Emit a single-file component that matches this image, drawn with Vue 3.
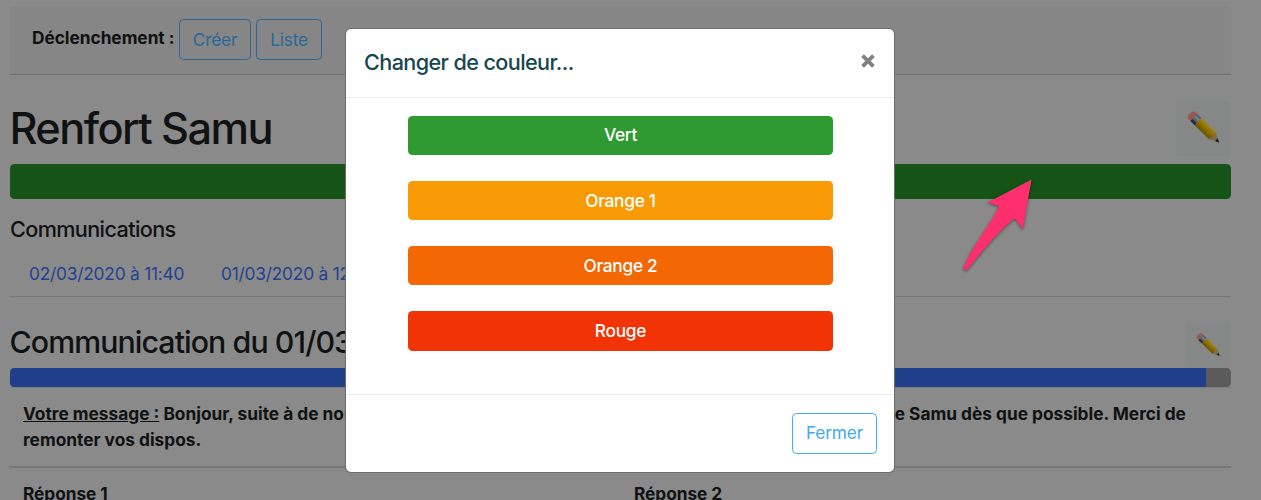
<script setup>
const colors = [
  { label: 'Vert', cls: 'green' },
  { label: 'Orange 1', cls: 'amber' },
  { label: 'Orange 2', cls: 'orange' },
  { label: 'Rouge', cls: 'red' },
]
</script>

<template>
  <div class="screen">
    <svg class="defs" width="0" height="0" aria-hidden="true">
      <defs>
        <linearGradient id="wood" x1="0" y1="0" x2="0" y2="1">
          <stop offset="0" stop-color="#a48617" />
          <stop offset="0.35" stop-color="#927400" />
          <stop offset="1" stop-color="#665005" />
        </linearGradient>
        <symbol id="pencil" viewBox="0 0 34 34">
          <g transform="translate(2.6 3.4) rotate(44.5)">
            <path d="M3.5 -4.9H7V4.9H3.5C-.8 4.9 -.8 -4.9 3.5 -4.9Z" fill="#965752" />
            <path d="M6 -4.9H12V4.9H6Z" fill="#59616c" />
            <path d="M6 -2.8H12V-.4H6Z" fill="#737b87" />
            <path d="M6 2H12V4.9H6Z" fill="#252b32" />
            <path d="M12 -4.9H32L34 0L32 4.9H12Z" fill="url(#wood)" />
            <path d="M32 -4.9L41 0L32 4.9L33 1.5L31.5 0L33 -1.8Z" fill="#7d6c45" />
            <path d="M37.6 -1.9L41.5 0L37.6 1.9Z" fill="#151515" />
          </g>
        </symbol>
      </defs>
    </svg>

    <main class="page">
      <div class="toolbar">
        <strong class="trigger">Déclenchement :</strong>
        <button class="btn create">Créer</button>
        <button class="btn list">Liste</button>
      </div>

      <div class="row title-row">
        <h1>Renfort Samu</h1>
        <button class="edit big"><svg><use href="#pencil" /></svg></button>
      </div>
      <div class="status"></div>

      <h5>Communications</h5>
      <nav class="tabs">
        <a>02/03/2020 à 11:40</a>
        <a>01/03/2020 à 12:15</a>
      </nav>

      <div class="row comm-row">
        <h3>Communication du 01/03/2020</h3>
        <button class="edit small"><svg><use href="#pencil" /></svg></button>
      </div>
      <div class="progress"><div class="done"></div></div>

      <div class="message">
        <div class="line">
          <span class="start"><u>Votre message :</u> Bonjour, suite à de nombreux</span>
          <span class="end">le Samu dès que possible. Merci de</span>
        </div>
        <div class="line"><span>remonter vos dispos.</span></div>
      </div>
      <div class="answers">
        <strong>Réponse 1</strong>
        <strong>Réponse 2</strong>
      </div>
    </main>

    <svg class="arrow" width="90" height="110" viewBox="0 0 90 110">
      <path d="M81.5 19.5L37.5 42.5L48.8 46C46 57 22 86 13.6 107.3C12.8 110.5 15.4 111 17.5 109C31 93 53 66 65 58.6L72.8 69Z" transform="translate(0 -10)" />
    </svg>

    <section class="modal">
      <header>
        <h2>Changer de couleur...</h2>
        <button class="close" aria-label="Fermer la fenêtre">
          <svg width="14" height="14" viewBox="0 0 14 14"><path d="M1.6 1.6L12.4 12.4M12.4 1.6L1.6 12.4" /></svg>
        </button>
      </header>
      <div class="choices">
        <button v-for="c in colors" :key="c.label" class="choice" :class="c.cls">{{ c.label }}</button>
      </div>
      <footer><button class="btn dismiss">Fermer</button></footer>
    </section>
  </div>
</template>

<style>
html, body { margin: 0; overflow: hidden; background: #8a8a8a; }
</style>

<style scoped>
.screen { position: relative; width: 1261px; height: 500px; overflow: hidden; background: #8a8a8a; color: #0f1112; font: 17.3px/26px Inter, sans-serif; }
.screen * { box-sizing: border-box; }
.defs { position: absolute; }
button { font: inherit; margin: 0; padding: 0; border: 0; background: none; }
h1, h2, h3, h5 { margin: 0; font-weight: 500; white-space: nowrap; }
.page { width: 1221px; margin-left: 10px; padding-top: 6px; }
.toolbar { height: 69px; display: flex; align-items: flex-start; padding: 13px 0 0 22px; background: #868686; border-bottom: 1px solid #727272; border-radius: 4px 4px 0 0; }
.trigger { width: 147px; padding-top: 6px; font-weight: 700; letter-spacing: -.03px; white-space: nowrap; }
.btn { height: 41px; border: 1px solid #26699a; border-radius: 4.5px; color: #26699a; letter-spacing: -.2px; }
.create { width: 72px; }
.list { width: 66px; margin-left: 5px; }
.row { display: flex; justify-content: space-between; }
.title-row { height: 89px; padding-top: 26px; }
h1 { font-size: 43.3px; line-height: 55px; letter-spacing: -1.55px; margin-left: -.6px; }
.edit { display: flex; align-items: center; justify-content: center; background: #868888; border-radius: 4px; }
.big { width: 55px; height: 55px; }
.big svg { width: 34px; height: 34px; margin-top: -4px; }
.small { width: 46px; height: 45px; }
.small svg { width: 25px; height: 25px; margin-top: -3px; }
.status { height: 35px; border-radius: 4.5px; background: #155317; }
h5 { font-size: 21.6px; line-height: 26px; margin-top: 17px; padding-bottom: 1px; letter-spacing: -.6px; }
.tabs { height: 54px; display: flex; border-bottom: 1px solid #777; padding: 18px 0 0 19px; color: #1f438f; letter-spacing: -.2px; }
.tabs a { width: 192px; white-space: nowrap; }
.comm-row { height: 71px; padding-top: 26px; }
h3 { font-size: 30.3px; line-height: 38px; letter-spacing: -.92px; margin-left: -.5px; }
.progress { height: 19px; border-radius: 4.5px; overflow: hidden; background: #5b5b5b; }
.done { width: 1196px; height: 19px; background: #1f3f8b; }
.message { height: 81px; padding: 13px 13px 0; border-top: 1px solid #7b7b7b; border-bottom: 2px solid #777; font-weight: 700; }
.line { display: flex; height: 26px; white-space: nowrap; }
.start { width: 867px; }
.answers { display: grid; grid-template-columns: 611px 1fr; padding: 13px 0 0 13px; }
.answers strong { font-weight: 700; letter-spacing: -.05px; }
.arrow { position: absolute; left: 950px; top: 170px; fill: #ff2e6d; filter: drop-shadow(0 1.5px 1.5px rgba(0, 0, 0, .45)); }
.modal { position: absolute; left: 346px; top: 29px; width: 548px; height: 443px; border-radius: 5px; background: #fff; box-shadow: 0 0 0 1px #6c6c6c; }
header { height: 69px; display: flex; justify-content: space-between; padding: 17px 19px 0 18px; border-bottom: 1px solid #e8eaec; }
h2 { color: #164650; font-size: 21.6px; line-height: 32px; letter-spacing: -.6px; }
.close { height: 14px; margin-top: 8px; }
.close svg { display: block; }
.close path { stroke: #818181; stroke-width: 3.8; }
.choices { height: 296px; padding: 18px 61px 0 62px; display: flex; flex-direction: column; gap: 26px; }
.choice { height: 39.1px; border-radius: 4.5px; color: #fff; font-weight: 500; letter-spacing: -.28px; }
.green { background: #2f9932; padding-bottom: 1px; }
.amber { background: #f79a05; }
.orange { background: #f36705; }
.red { background: #f23305; height: 40px; padding-bottom: 1px; }
footer { height: 78px; display: flex; justify-content: flex-end; padding: 18px 17px 0 0; border-top: 1px solid #e8eaec; }
.dismiss { width: 85px; padding-bottom: 1px; border-color: #42aaf5; color: #42aaf5; }
</style>
